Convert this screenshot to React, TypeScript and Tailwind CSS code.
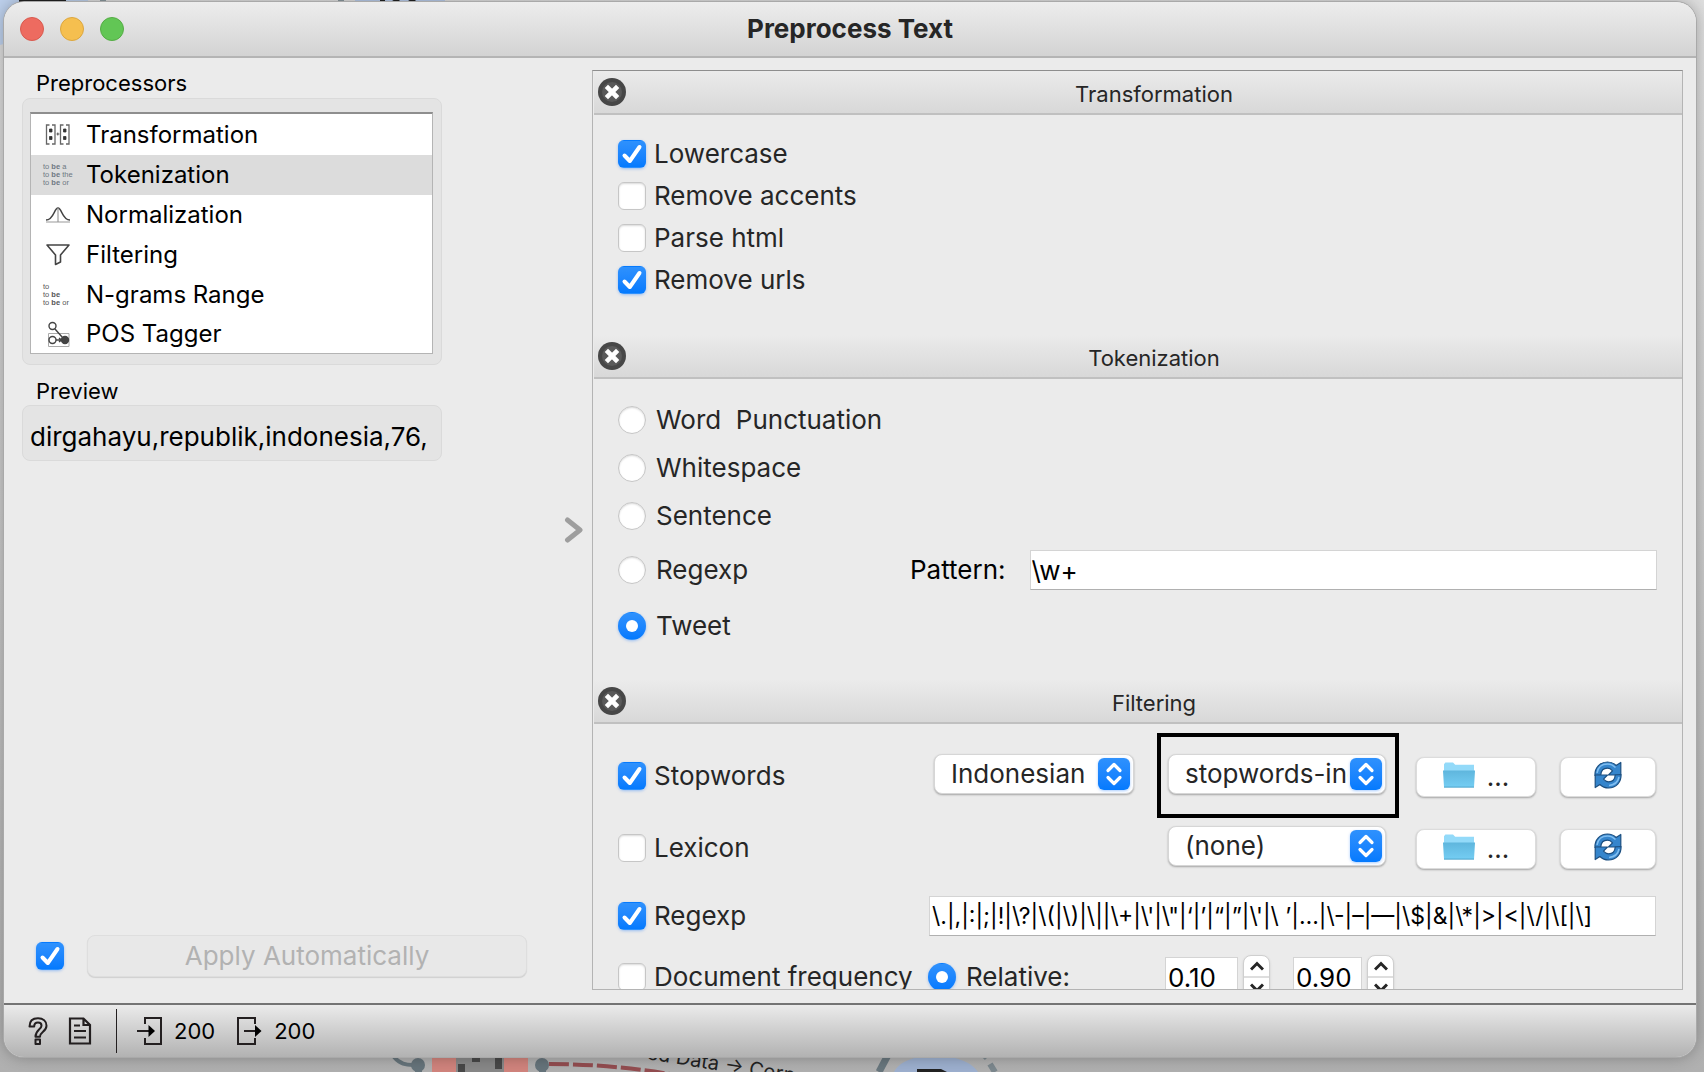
import { useState, type ReactNode, type InputHTMLAttributes } from "react";

function Check({ className = "", ...rest }: InputHTMLAttributes<HTMLInputElement>) {
  return (
    <span className={"relative inline-block size-7 shrink-0 " + className}>
      <input
        type="checkbox"
        className="peer block size-7 appearance-none rounded-md border border-[#c6c6c6] bg-white shadow-[inset_0_1px_2px_rgba(0,0,0,0.15)] checked:border-transparent checked:bg-linear-to-b checked:from-[#2e91fd] checked:to-[#047afe] checked:shadow-[0_1px_3px_rgba(0,110,255,0.35)]"
        {...rest}
      />
      <svg viewBox="0 0 28 28" className="pointer-events-none absolute inset-0 hidden size-7 peer-checked:block" fill="none" stroke="#fff" strokeWidth="4" strokeLinecap="round" strokeLinejoin="round">
        <path d="M6.5 15.5 11.8 21 21.5 7" />
      </svg>
    </span>
  );
}

function Radio(props: InputHTMLAttributes<HTMLInputElement>) {
  return (
    <span className="relative inline-block size-7 shrink-0">
      <input
        type="radio"
        className="peer block size-7 appearance-none rounded-full border border-[#c6c6c6] bg-white shadow-[inset_0_1px_2px_rgba(0,0,0,0.15)] checked:border-transparent checked:bg-linear-to-b checked:from-[#2e91fd] checked:to-[#047afe] checked:shadow-[0_1px_3px_rgba(0,110,255,0.35)]"
        {...props}
      />
      <span className="pointer-events-none absolute inset-2 hidden rounded-full bg-white peer-checked:block" />
    </span>
  );
}

function CheckRow({ label, checked, className = "" }: { label: string; checked?: boolean; className?: string }) {
  return (
    <label className={"flex items-center gap-2 whitespace-nowrap " + className}>
      <Check defaultChecked={checked} />
      {label}
    </label>
  );
}

function SectionHeader({ title }: { title: string }) {
  return (
    <header className="flex h-11 shrink-0 items-center border-b-2 border-[#c0c0c0] bg-linear-to-b from-[#ebebeb] to-[#d8d8d8] pl-1">
      <button type="button" aria-label={"Remove " + title} className="size-7 shrink-0">
        <svg viewBox="0 0 28 28" className="size-7">
          <circle cx="14" cy="14" r="14" fill="#474747" />
          <circle cx="14" cy="14" r="10" fill="#5a5a5a" />
          <path d="M10 10 18 18M18 10 10 18" stroke="#fff" strokeWidth="4.6" strokeLinecap="square" />
        </svg>
      </button>
      <h2 className="flex-1 pt-1 text-center text-[22px] leading-7">{title}</h2>
    </header>
  );
}

function Dropdown({ label, value, className }: { label: string; value: string; className: string }) {
  return (
    <span className={"relative block h-10 shrink-0 rounded-lg border border-[#d6d6d6] bg-white shadow-[0_1px_2px_rgba(0,0,0,0.3)] " + className}>
      <select aria-label={label} className="block size-full appearance-none overflow-hidden pr-[37px] pl-4 text-clip text-[#262626]">
        <option>{value}</option>
      </select>
      <span className="pointer-events-none absolute top-[3px] right-[3px] h-8 w-8 rounded-md bg-linear-to-b from-[#2e91fd] to-[#047afe] shadow-[0_1px_3px_rgba(0,110,255,0.35)]">
        <svg viewBox="0 0 32 32" className="size-8" fill="none" stroke="#fff" strokeWidth="3.2" strokeLinecap="round" strokeLinejoin="round">
          <path d="M10 12.5 16 6.5 22 12.5M10 19.5 16 25.5 22 19.5" />
        </svg>
      </span>
    </span>
  );
}

function FileButtons({ name }: { name: string }) {
  const face = "flex h-10 items-center justify-center rounded-lg border border-[#dcdcdc] bg-white shadow-[0_1px_2px_rgba(0,0,0,0.3)]";
  return (
    <>
      <button type="button" aria-label={"Browse " + name} className={face + " w-[120px] shrink-0 gap-3"}>
        <svg viewBox="0 0 32 26" className="mb-1 h-[26px] w-8">
          <defs>
            <linearGradient id={"folder-" + name} x1="0" y1="0" x2="0" y2="1">
              <stop offset="0" stopColor="#5fb6dd" />
              <stop offset="1" stopColor="#74cdf3" />
            </linearGradient>
          </defs>
          <path d="M1 2.2 2.4.6H10l2.2 2.2H31V10H1z" fill="#93daf9" />
          <path d="M0 8.5h32L31 25.2H1z" fill={"url(#folder-" + name + ")"} />
          <path d="M1 24.6h30v1H1z" fill="#4fa5cb" />
        </svg>
        <span>...</span>
      </button>
      <button type="button" aria-label={"Reload " + name} className={face + " w-24 shrink-0"}>
        <svg viewBox="0 0 28 28" className="mb-1 size-7" strokeLinejoin="round">
          <g fill="#3585cc" stroke="#1c4f80" strokeWidth="1.2">
            <path d="M1 14.500C.5 7 6 1 13.500 1c3.500 0 6.500 1.400 8.600 3.500L26.800 1.500v12.500H14.500l4-4.200C17 8 15.500 7.200 13.500 7.200 9.500 7.200 7 10 6.800 14z" />
            <path d="M27 13.500c.5 7.500-5 13.500-12.500 13.500-3.500 0-6.500-1.400-8.600-3.500L1.200 26.500V14h12.300l-4 4.200c1.500 1.800 3 2.600 5 2.600 4 0 6.500-2.800 6.700-6.800z" />
          </g>
          <path d="M3 12C4 6 8 3 13.500 3c3 0 5.500 1 8 3.600M25 16c-1 5-5 8-10 8.500" fill="none" stroke="#7fbdf0" strokeWidth="1.500" />
        </svg>
      </button>
    </>
  );
}

function Spin({ label, value, className }: { label: string; value: string; className: string }) {
  return (
    <span className="flex shrink-0 gap-[5px]">
      <input aria-label={label} defaultValue={value} className={"mt-[2px] h-10 border border-[#d4d4d4] bg-white px-[2px] text-black " + className} />
      <span className="flex h-11 w-[27px] flex-col overflow-hidden rounded-lg border border-[#cfcfcf] bg-white shadow-sm">
        <button type="button" aria-label={label + " up"} className="flex flex-1 items-center justify-center border-b-2 border-[#dedede]">
          <svg viewBox="0 0 14 10" className="h-2.5 w-3.5" fill="none" stroke="#262626" strokeWidth="3"><path d="M1 8.500 7 2.500 13 8.500" /></svg>
        </button>
        <button type="button" aria-label={label + " down"} className="flex flex-1 items-center justify-center">
          <svg viewBox="0 0 14 10" className="h-2.5 w-3.5" fill="none" stroke="#262626" strokeWidth="3"><path d="M1 1.500 7 7.500 13 1.500" /></svg>
        </button>
      </span>
    </span>
  );
}

function WordsIcon({ lines, fill }: { lines: string[][]; fill: string }) {
  return (
    <svg viewBox="0 0 30 26" className="h-[26px] w-[30px] overflow-visible" fontFamily="Liberation Sans" fontSize="7.500" fill={fill}>
      {lines.map(([a, b, c], i) => (
        <text key={i} x="0" y={7 + i * 8}>
          {a} <tspan fontWeight="700">{b}</tspan> {c}
        </text>
      ))}
    </svg>
  );
}

const preprocessors: { name: string; row: string; icon: ReactNode }[] = [
  {
    name: "Transformation",
    row: "h-10",
    icon: (
      <svg viewBox="0 0 30 26" className="h-[26px] w-[30px]" fill="none" stroke="#666" strokeWidth="1.300">
        <path d="M6.500 3H3.500V22H6.500M9 3h3V22H9M20.500 3h-3V22h3M23 3h3V22h-3" />
        <path d="M6.500 7h2.500v3H6.500zM6.500 14.500h2.500v3H6.500zM20.500 7h2.500v3h-2.500zM20.500 14.500h2.500v3h-2.500zM13.500 12h3M14.800 10.500v3" fill="#333" stroke="#333" strokeWidth=".8" />
      </svg>
    ),
  },
  { name: "Tokenization", row: "h-10", icon: <WordsIcon fill="#6d7882" lines={[["to", "be", "a"], ["to", "be", "the"], ["to", "be", "or"]]} /> },
  {
    name: "Normalization",
    row: "h-10",
    icon: (
      <svg viewBox="0 0 30 26" className="h-[26px] w-[30px]" fill="none" stroke="#444" strokeWidth="1.600">
        <path d="M3 18C11 18 11 6 15 6S19 18 27 18" />
        <path d="M3 20h24M15 6v14" stroke="#999" strokeWidth="1.200" />
      </svg>
    ),
  },
  {
    name: "Filtering",
    row: "h-10",
    icon: (
      <svg viewBox="0 0 30 26" className="h-[26px] w-[30px]" fill="none" stroke="#444" strokeWidth="1.600" strokeLinejoin="round">
        <path d="M4 3h22L17.500 13v7l-5 2.500V13z" />
      </svg>
    ),
  },
  { name: "N-grams Range", row: "h-10", icon: <WordsIcon fill="#555" lines={[["to", "", ""], ["to", "be", ""], ["to", "be", "or"]]} /> },
  {
    name: "POS Tagger",
    row: "h-[38px]",
    icon: (
      <svg viewBox="0 0 30 26" className="h-[26px] w-[30px]" fill="none" stroke="#444" strokeWidth="1.400">
        <path d="M5.500 12.500h20.500v13H5.500z" stroke="#aaa" strokeWidth="1" />
        <circle cx="9.500" cy="5" r="3.500" />
        <circle cx="9.500" cy="19" r="3.500" />
        <circle cx="22" cy="19" r="3.500" fill="#444" />
        <path d="M12 8 19.500 16.500M13 19h5M16 17l2.500 2-2.500 2" />
      </svg>
    ),
  },
];

const tokenizers = [
  { name: "Word  Punctuation", row: "h-12" },
  { name: "Whitespace", row: "h-12" },
  { name: "Sentence", row: "h-12" },
  { name: "Regexp", row: "h-[60px]" },
  { name: "Tweet", row: "h-[52px]" },
];

/* Workflow canvas that shows around the edges of the dialog. */
function Canvas() {
  return (
    <>
      <svg viewBox="0 0 460 60" className="absolute top-0 left-0 h-[60px] w-[460px]" aria-hidden="true">
        <path d="M0 0h88V20L0 45z" fill="#bdd0ec" />
        <path d="M19 0h47v3H19z" fill="#222" />
        <path d="M100 0h6v3h-6zM338 0h6v3h-6z" fill="#8a979d" />
        <path d="M355 0h90v3h-90z" fill="#b6cae8" />
        <path d="M380 0h5v3h-5zM392 0h8l-3 3zM408 0h8l-3 3z" fill="#222" />
      </svg>
      <svg viewBox="0 0 660 22" className="absolute bottom-0 left-[380px] h-[22px] w-[660px]" aria-hidden="true">
        <path d="M14 7C20 14 26 15 33 15" stroke="#66747b" strokeWidth="4" fill="none" />
        <circle cx="38" cy="15" r="7" fill="#66747b" />
        <path d="M35 15h7v7h-7z" fill="#66747b" />
        <path d="M52 6h96v16H52z" fill="#d1847d" />
        <path d="M76 6h48v16H76z" fill="#888" />
        <path d="M78 14h7v8h-7zM92 6h8v6h-8zM115 6h7v13h-7z" fill="#484848" />
        <circle cx="162" cy="15" r="7" fill="#66747b" />
        <path d="M159 15h7v7h-7z" fill="#66747b" />
        <path d="M169 14 C200 14 240 16 290 24" stroke="#934d50" strokeWidth="4" strokeDasharray="20 4" fill="none" />
        <text x="266" y="9" transform="rotate(9 266 9)" fontFamily="Inter" fontSize="20" fill="#222">ed Data → Corpus</text>
        <path d="M508 5 499 22" stroke="#69777e" strokeWidth="7" />
        <path d="M514 22C524 0 584 0 598 22z" fill="#9db0cf" />
        <path d="M537 19h24l6 3h-30z" fill="#222" />
        <path d="M605 6l2 2M610 14l5 8" stroke="#7c888e" strokeWidth="6" />
      </svg>
    </>
  );
}

export default function App() {
  const [selected, setSelected] = useState("Tokenization");
  return (
    <div className="relative flex h-screen flex-col overflow-hidden bg-linear-to-b from-[#dedede] via-[#cacaca] to-[#b0b0b0] pt-0.5 pr-2 pb-[15px] pl-1 font-['Inter','Liberation_Sans',sans-serif] text-[26px] leading-8 text-[#262626]">
      <Canvas />
      <main className="relative flex min-h-0 flex-1 flex-col overflow-hidden rounded-[20px] bg-[#ebebeb] shadow-[0_0_0_1px_#a9a9a9,0_0_16px_rgba(0,0,0,0.3)]">
        <div className="flex h-14 shrink-0 items-center border-b-2 border-[#b4b4b4] bg-linear-to-b from-[#ededed] to-[#d3d3d3] px-4">
          <div className="flex w-[120px] gap-4">
            <button type="button" aria-label="Close" className="size-6 rounded-full border border-[#d85a4f] bg-[#ed6b60]" />
            <button type="button" aria-label="Minimize" className="size-6 rounded-full border border-[#dba63f] bg-[#f5bf4f]" />
            <button type="button" aria-label="Zoom" className="size-6 rounded-full border border-[#55ac45] bg-[#62c655]" />
          </div>
          <h1 className="flex-1 pr-[120px] text-center font-bold">Preprocess Text</h1>
        </div>

        <div className="flex min-h-0 flex-1 pr-[13px]">
          <aside className="flex w-[536px] shrink-0 flex-col pt-[11px] pl-[18px] text-black">
            <h2 className="pl-3.5 text-[22px] leading-7">Preprocessors</h2>
            <div className="mt-px w-[420px] rounded-lg border border-[#dadada] bg-[#e4e4e4] pt-[13px] pr-2 pb-2.5 pl-[7px]">
              <ul className="border border-t-2 border-[#b4b4b4] border-t-[#8e8e8e] bg-white pt-px text-2xl">
                {preprocessors.map((p) => (
                  <li key={p.name}>
                    <button
                      type="button"
                      onClick={() => setSelected(p.name)}
                      className={"flex w-full items-center gap-[13px] pl-3 text-left " + p.row + (p.name === selected ? " bg-[#dcdcdc]" : "")}
                    >
                      {p.icon}
                      {p.name}
                    </button>
                  </li>
                ))}
              </ul>
            </div>
            <h2 className="mt-3 pl-3.5 text-[22px] leading-7">Preview</h2>
            <div className="flex h-14 w-[420px] items-center rounded-lg border border-[#dadada] bg-[#e4e4e4] px-[7px] pt-2">
              <span className="whitespace-nowrap">dirgahayu,republik,indonesia,76,</span>
            </div>
            <div className="mt-auto mb-[26px] flex items-center gap-[23px] pl-3.5">
              <Check defaultChecked aria-label="Apply Automatically" />
              <button type="button" disabled className="h-[42px] w-[440px] rounded-lg border border-[#dedede] bg-[#e8e8e8] text-[#b2b2b2] shadow-[0_1px_1px_rgba(0,0,0,0.12)]">
                Apply Automatically
              </button>
            </div>
          </aside>

          <div className="flex w-13 shrink-0 items-center justify-end pr-2">
            <svg viewBox="0 0 20 28" className="h-7 w-5" fill="none" stroke="#9e9e9e" strokeWidth="5" strokeLinecap="round" strokeLinejoin="round">
              <path d="M3.500 3 16 13 3.500 23" />
            </svg>
          </div>

          <div className="mt-3 mb-[13px] min-w-0 flex-1 overflow-hidden border border-[#b4b4b4] border-t-[#8e8e8e] pl-px">
            <section>
              <SectionHeader title="Transformation" />
              <div className="px-6 pt-[18px] pb-[34px]">
                <CheckRow label="Lowercase" checked className="h-[42px]" />
                <CheckRow label="Remove accents" className="h-[42px]" />
                <CheckRow label="Parse html" className="h-[42px]" />
                <CheckRow label="Remove urls" checked className="h-[42px]" />
              </div>
            </section>

            <section>
              <SectionHeader title="Tokenization" />
              <div className="pt-[17px] pr-[25px] pb-7 pl-6">
                {tokenizers.map((t) => (
                  <div key={t.name} className={"flex items-center " + t.row}>
                    <label className="flex w-[292px] items-center gap-2.5 whitespace-pre">
                      <Radio name="tokenizer" defaultChecked={t.name === "Tweet"} />
                      {t.name}
                    </label>
                    {t.name === "Regexp" && (
                      <label className="flex flex-1 items-center gap-6 text-black">
                        Pattern:
                        <input defaultValue="\w+" className="h-10 min-w-0 flex-1 border border-[#d4d4d4] border-b-[#b0b0b0] bg-white px-px" />
                      </label>
                    )}
                  </div>
                ))}
              </div>
            </section>

            <section>
              <SectionHeader title="Filtering" />
              <div className="pt-[9px] pr-[26px] pl-6">
                <div className="flex h-[85px] items-center">
                  <CheckRow label="Stopwords" checked className="flex-1" />
                  <Dropdown label="Stopwords language" value="Indonesian" className="mb-1 w-[200px]" />
                  <div className="ml-[23px] h-[85px] w-[242px] shrink-0 border-4 border-black px-[7px] pt-[17px]">
                    <Dropdown label="Stopwords file" value="stopwords-indonesia.txt" className="w-[218px]" />
                  </div>
                  <div className="mt-0.5 ml-[17px] flex gap-6">
                    <FileButtons name="stopwords" />
                  </div>
                </div>
                <div className="flex h-[60px] items-center">
                  <CheckRow label="Lexicon" className="flex-1" />
                  <Dropdown label="Lexicon file" value="(none)" className="mb-1 w-[218px]" />
                  <div className="mt-0.5 ml-[30px] flex gap-6">
                    <FileButtons name="lexicon" />
                  </div>
                </div>
                <div className="flex h-[76px] items-center">
                  <CheckRow label="Regexp" checked className="w-[311px]" />
                  <input
                    aria-label="Regexp filter"
                    defaultValue={"\\.|,|:|;|!|\\?|\\(|\\)|\\||\\+|\\'|\\\"|‘|’|“|”|\\'|\\ ’|…|\\-|–|—|\\$|&|\\*|>|<|\\/|\\[|\\]"}
                    className="h-10 min-w-0 flex-1 border border-[#d4d4d4] border-b-[#b0b0b0] bg-white px-0.5 text-[23px] text-black"
                  />
                </div>
                <div className="flex h-[46px] items-center">
                  <CheckRow label="Document frequency" className="w-[310px]" />
                  <label className="flex w-[237px] items-center gap-2.5">
                    <Radio name="frequency" defaultChecked />
                    Relative:
                  </label>
                  <div className="flex gap-[23px]">
                    <Spin label="Minimum frequency" value="0.10" className="w-[73px]" />
                    <Spin label="Maximum frequency" value="0.90" className="w-[69px]" />
                  </div>
                </div>
              </div>
            </section>
          </div>
        </div>

        <footer className="flex h-[54px] shrink-0 items-center border-t-2 border-[#747474] bg-linear-to-b from-[#ebebeb] to-[#b2b2b2] pl-6 text-black">
          <button type="button" aria-label="Help">
            <svg viewBox="0 0 20 28" className="h-7 w-5" fill="none" stroke="#231f20" strokeWidth="2" strokeLinejoin="round">
              <path d="M1.500 9.500C1.500 4 5 1.200 10 1.200s8.500 3 8.500 7.500c0 6-6.500 6-6.500 11H7.500c0-7 6-7.500 6-11 0-2-1.300-3.200-3.500-3.200S6.200 7 6.200 9.500z" />
              <path d="M7.500 22.500H12V27H7.500z" />
            </svg>
          </button>
          <button type="button" aria-label="Report" className="ml-5">
            <svg viewBox="0 0 24 28" className="h-7 w-6" fill="none" stroke="#231f20" strokeWidth="2.200">
              <path d="M2 1.500h13.500L22 8v18.500H2zM15.500 1.500V8H22M6 8.500h6M6 14h12M6 20.500h12" />
            </svg>
          </button>
          <span className="ml-6 h-11 w-px bg-[#231f20]" />
          <span className="ml-5 flex items-center gap-[11px] text-[22px]">
            <svg viewBox="0 0 26 28" className="h-7 w-[26px]" fill="none" stroke="#231f20" strokeWidth="2">
              <path d="M8 7V1h16v26H8v-6M0 14h14" />
              <path d="M11.500 8 18 14l-6.500 6z" fill="#000" stroke="none" />
            </svg>
            200
          </span>
          <span className="ml-[22px] flex items-center gap-[11px] text-[22px]">
            <svg viewBox="0 0 26 28" className="h-7 w-[26px]" fill="none" stroke="#231f20" strokeWidth="2">
              <path d="M18 7V1H1v26h17v-6M7 14h14" />
              <path d="M18 8 24.500 14 18 20z" fill="#000" stroke="none" />
            </svg>
            200
          </span>
        </footer>
      </main>
    </div>
  );
}
